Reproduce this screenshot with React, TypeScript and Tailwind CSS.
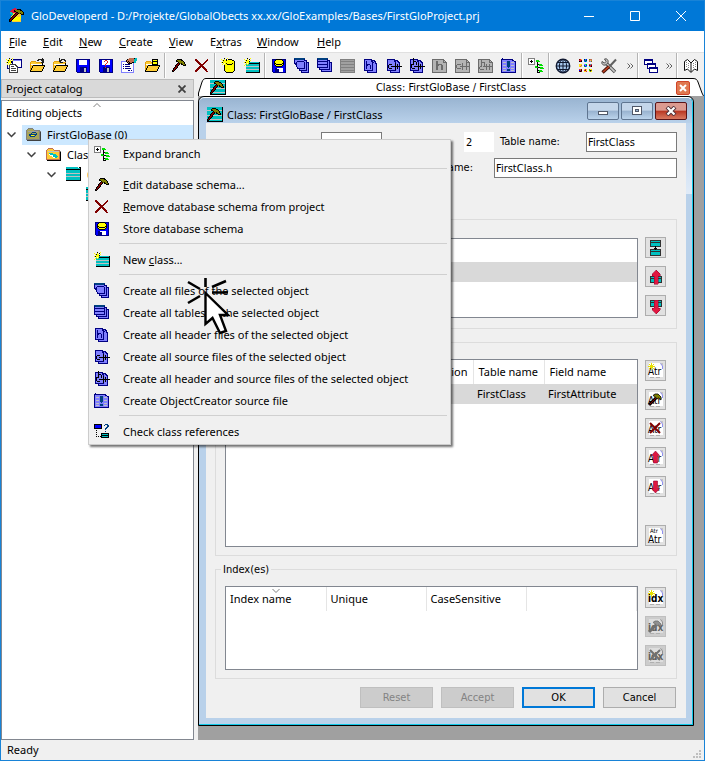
import type { ReactNode } from "react";

const COLORS: Record<string, string> = {
  K: "#000000",
  O: "#808000",
  R: "#800000",
  T: "#00c0c0",
  Y: "#ffff00",
  G: "#ffcc33",
  g: "#e0a010",
  B: "#0000ff",
  N: "#000080",
  L: "#8080ff",
  W: "#ffffff",
  S: "#808080",
  s: "#a0a0a0",
  D: "#404040",
  P: "#e01840",
  p: "#900030",
  M: "#004080",
  E: "#00e000",
  A: "#a0c8f0",
  F: "#c07050",
  C: "#c0c0c0",
  H: "#a8a458",
};

const GRAYS: Record<string, string> = { L: "#b4b4b4", N: "#6c6c6c" };

function Sprite({ rows, gray, children }: { rows: string[]; gray?: boolean; children?: ReactNode }) {
  const cells: ReactNode[] = [];
  rows.forEach((row, y) => {
    let x = 0;
    while (x < row.length) {
      let end = x + 1;
      while (end < row.length && row[end] === row[x]) end++;
      const key = row[x];
      if (key !== ".") {
        const fill = (gray && GRAYS[key]) || COLORS[key];
        cells.push(<rect key={`${x}-${y}`} x={x} y={y} width={end - x} height={1} fill={fill} />);
      }
      x = end;
    }
  });
  return (
    <svg viewBox="0 0 16 16" shapeRendering="crispEdges" aria-hidden="true" className="block h-4 w-4 shrink-0">
      {cells}
      {children}
    </svg>
  );
}

const HAMMER = [
  "................",
  "......KKKKK.....",
  ".....KOOOOKK....",
  ".....KKOOOOOK...",
  ".......KOOOOOK..",
  "......KRKOKOOK..",
  ".....KRRK.KKOOK.",
  "....KRRK....KKK.",
  "....KRK.........",
  "...KRRK.........",
  "..KRRK..........",
  "..KRK...........",
  ".KRK............",
  ".KK.............",
];
const CROSS = [
  "................",
  ".RR..........R..",
  ".RRR........RR..",
  "..RRR......RR...",
  "...RRR....RR....",
  "....RRR..RR.....",
  ".....RRRRR......",
  "......RRR.......",
  ".....RRRRR......",
  "....RRR.RRR.....",
  "...RRR...RRR....",
  "..RRR.....RRR...",
  ".RRR.......RR...",
  ".RR.........RR..",
];
const TABLE = [
  "TTTTTTTTTTTT.KK.",
  "TTTTTTTTTTTTTTK.",
  "KKKKKKKKKKKKKKK.",
  "TTTTTTTTTTTTTTK.",
  "TTTTTTTTTTTTTTK.",
  "TTTTTTTTTTTTTTK.",
  "CCCCCCCCCCCCCCK.",
  "TTTTTTTTTTTTTTK.",
  "TTTTTTTTTTTTTTK.",
  "CCCCCCCCCCCCCCK.",
  "TTTTTTTTTTTTTTK.",
  "TTTTTTTTTTTTTTK.",
  "TTTTTTTTTTTTTTK.",
  "KKKKKKKKKKKKKKK.",
];
const CLASS_HAMMER = [
  "TTTTTTTTTTTTTTTK",
  "TTTTTKKKKTTTTTTK",
  "TTTTKOOOOKKTTTTK",
  "CCCCKKOOOOOKCCCK",
  "TTTTTTKOOOOOKTTK",
  "TTTTTKRKOKOOKTTK",
  "TTTTKRRKTKKOOKTK",
  "TTTKRRKTTTTKKKTK",
  "CCCKRKCCCCCCCCCK",
  "TTKRRKTTTTTTTTTK",
  "TKRRKTTTTTTTTTTK",
  "TKRKTTTTTTTTTTTK",
  "KRKCCCCCCCCCCCCK",
  "KKTTTTTTTTTTTTTK",
  "KKKKKKKKKKKKKKKK",
];
const NEW_CLASS = [
  "...K..Y.........",
  "Y..Y.K..........",
  ".YKYY.Y.........",
  "..YYYK..........",
  "YKYYYTTTTTTTTTTK",
  "..Y.YKKKKKKKKKKK",
  ".YTYTTTTTTTTTTTK",
  "Y.TTTTTTTTTTTTTK",
  "..CCCCCCCCCCCCCK",
  "..TTTTTTTTTTTTTK",
  "..TTTTTTTTTTTTTK",
  "..CCCCCCCCCCCCCK",
  "..TTTTTTTTTTTTTK",
  "..TTTTTTTTTTTTTK",
  "..KKKKKKKKKKKKKK",
];
const CYLINDER = [
  "...K..Y.........",
  "Y..Y.K.KKKK.....",
  ".YKYYKYYYYYKK...",
  "..YYYYYYYYYYYK..",
  "YKYYYYYYYYYYYK..",
  "..Y.YKYYYYYKYK..",
  ".Y.YYYKKKKKYYK..",
  "...KYYYYYYYYYK..",
  "...KYYYYYYYYYK..",
  "...KYYYYYYYYYK..",
  "...KYYYYYYYYYK..",
  "...KYYYYYYYYYK..",
  "...KYYYYYYYYYK..",
  "....KYYYYYYYK...",
  ".....KKKKKKK....",
];
const FLOPPY = [
  "................",
  ".NNNNNNNNNNNNNN.",
  ".NBBWWWWWWWWBBN.",
  ".NBBWWWWWWWWBBN.",
  ".NBBWWWWWWWWBBN.",
  ".NBBWWWWWWWWBBN.",
  ".NBBWWWWWWWWBBN.",
  ".NBBBBBBBBBBBBN.",
  ".NBBBBBBBBBBBBN.",
  ".NBBBNNNNNNNBBN.",
  ".NBBBNNNNCCNBBN.",
  ".NBBBNNNNCCNBBN.",
  ".NBBBNNNNCCNBBN.",
  ".NBBBNNNNCCNBBN.",
  "..NNNNNNNNNNNNN.",
];
const DB_FLOPPY = [
  "................",
  ".NNNNKKKKKKNNNN.",
  ".NBBKYYYYYYKBBN.",
  ".NBKYYYYYYYYKBN.",
  ".NBKYYYYYYYYKBN.",
  ".NBKKYYYYYYKKBN.",
  ".NBKYKKKKKKYKBN.",
  ".NBBKYYYYYYKBBN.",
  ".NBBBKKKKKKBBBN.",
  ".NBBBBBBBBBBBBN.",
  ".NBBNNWWWWWWBBN.",
  ".NBBNNNNWWWWBBN.",
  ".NBBNNNNWWWWBBN.",
  ".NBBNNNNWWWWBBN.",
  "..NNNNNNNNNNNNN.",
];
const FOLDER = [
  "................",
  "................",
  "................",
  "..ggggg.........",
  ".gGGGGGggggggg..",
  ".gGGGGGGGGGGGK..",
  ".gWWWWWWWWWWWK..",
  ".gGGKKKKKKKKKKKK",
  ".gGKGGGGGGGGGGGK",
  ".gGKGGGGGGGGGGK.",
  ".gKGGGGGGGGGGGK.",
  ".gKGGGGGGGGGGK..",
  ".KGGGGGGGGGGGK..",
  ".KKKKKKKKKKKK...",
];
const FILES = [
  "MMMMMMMMMMM.....",
  "NMMMMMMMMMN.....",
  "NLLLLLLLLLNNN...",
  "NLLNNNNNNNLLN...",
  "NLNLLLLLLLNLNNN.",
  "NNNLLLLLLLNLNLN.",
  ".NNLLLLLLLNLNLN.",
  "..NLLLLLLLNLNLN.",
  "..NLLLLLLLNLNLN.",
  "...NLLLLLLNLNLN.",
  "...NNNNNNNNLNLN.",
  ".....NLLLLLLNLN.",
  ".....NNNNNNNNLN.",
  ".......NLLLLLLN.",
  ".......NNNNNNNN.",
];
const TABLES = [
  "MMMMMMMMMMM.....",
  "NMMMMMMMMMN.....",
  "NLLLLLLLLLNNN...",
  "NNNNNNNNNNNLN...",
  "NLLLLLLLLLNLNNN.",
  "NLLLLLLLLLNLNLN.",
  "NNNNNNNNNNNLNLN.",
  "NLLLLLLLLLNLNLN.",
  "NLLLLLLLLLNLNLN.",
  "NNNNNNNNNNNLNLN.",
  "..NLLLLLLLLLNLN.",
  "..NNNNNNNNNNNLN.",
  "....NLLLLLLLLLN.",
  "....NNNNNNNNNNN.",
];
const HEADERS = [
  "................",
  ".NNNNNNNN.......",
  ".NLLLLLLNNNN....",
  ".NLNLLLLNNLNN...",
  ".NLNLLLLLNNLN...",
  ".NLNLLLLLNLLNN..",
  ".NLNNNNLLNLLLN..",
  ".NLNNLLNLNLLLN..",
  ".NLNLLLNLNLLLN..",
  ".NLNLLLNLNLLLN..",
  ".NLNLLLNLNLLLN..",
  ".NLLLLLLLNLLLN..",
  ".NNNNNNNNNLLLN..",
  "....NLLLLLLLLN..",
  "....NNNNNNNNNN..",
];
const SOURCES = [
  "................",
  ".NNNNNNNN.......",
  ".NLLLLLLNNNN....",
  ".NLLLLLLNNLNN...",
  ".NLLLLLLLNLLNN..",
  ".NLLLLLLLKLLLN..",
  ".NLKKKLLLKLKLN..",
  ".NKLLLLLLKLKLN..",
  ".NKLLKKKKKKKKKKK",
  ".NKLLLLLLKLKLN..",
  ".NLKKKLLLKLKLN..",
  ".NLLLLLLLKLLLN..",
  ".NNNNNNNNNLLLN..",
  "....NLLLLLLLLN..",
  "....NNNNNNNNNN..",
];
const HEADERS_SOURCES = [
  "....K...........",
  ".NNNKNNNN.......",
  ".NLLKLLLNNNN....",
  ".NLLKKKLNNLNN...",
  ".NLLKLLKLNLLNN..",
  ".NLLKLLKLKLLLN..",
  ".NKKKLLKLKLKLN..",
  ".NKLLLLLLKLKLN..",
  ".NKLLKKKKKKKKKKK",
  ".NKLLLLLLKLKLN..",
  ".NLKKKLLLKLKLN..",
  ".NLLLLLLLKLLLN..",
  ".NNNNNNNNNLLLN..",
  "....NLLLLLLLLN..",
  "....NNNNNNNNNN..",
];
const ONE_HEADER = [
  "................",
  "NNNNNNNNNNNN....",
  "NLLLLLLLLLLNN...",
  "NLLLNNLLLLLNLN..",
  "NLLLNNLLLLLNNNN.",
  "NLLLNNLLLLLLLLN.",
  "NLLLNNNNNNLLLLN.",
  "NLLLNNNLLNNLLLN.",
  "NLLLNNLLLNNLLLN.",
  "NLLLNNLLLNNLLLN.",
  "NLLLNNLLLNNLLLN.",
  "NLLLNNLLLNNLLLN.",
  "NLLLLLLLLLLLLLN.",
  "NLLLLLLLLLLLLLN.",
  "NNNNNNNNNNNNNNN.",
];
const ONE_SOURCE = [
  "................",
  "NNNNNNNNNNNN....",
  "NLLLLLLLLLLNN...",
  "NLLLLLLLLLLNLN..",
  "NLLLLLLLLLLNNNN.",
  "NLLLLLLNLLLNLLN.",
  "NLNNNNLNLLLNLLN.",
  "NNLLLLLNLLLNLLN.",
  "NNLLLNNNNNNNNNN.",
  "NNLLLLLNLLLNLLN.",
  "NLNNNNLNLLLNLLN.",
  "NLLLLLLNLLLNLLN.",
  "NLLLLLLLLLLLLLN.",
  "NLLLLLLLLLLLLLN.",
  "NNNNNNNNNNNNNNN.",
];
const ONE_BOTH = [
  "................",
  "NNNNNNNNNNNN....",
  "NLLNLLLLLLLNN...",
  "NLLNLLLLLLLNLN..",
  "NLLNNNNLLLLNNNN.",
  "NLLNLLNLLLLLLLN.",
  "NLLNLLNLNLLNLLN.",
  "NLLNLLNLNLLNLLN.",
  "NLNNLNNNNNNNNNN.",
  "NNLLLLLLNLLNLLN.",
  "NNLLLLLLNLLNLLN.",
  "NLNNNNLLNLLNLLN.",
  "NLLLLLLLLLLLLLN.",
  "NLLLLLLLLLLLLLN.",
  "NNNNNNNNNNNNNNN.",
];
const ONE_TABLE = [
  "................",
  "SSSSSSSSSSSSSSS.",
  "SsssssssssssssS.",
  "SSSSSSSSSSSSSSS.",
  "SsssssssssssssS.",
  "SsssssssssssssS.",
  "SSSSSSSSSSSSSSS.",
  "SsssssssssssssS.",
  "SsssssssssssssS.",
  "SSSSSSSSSSSSSSS.",
  "SsssssssssssssS.",
  "SsssssssssssssS.",
  "SSSSSSSSSSSSSSS.",
  "SsssssssssssssS.",
  "SSSSSSSSSSSSSSS.",
];
const CREATOR = [
  ".N..............",
  "NNNNNNNNNNNN....",
  "NLLLLLLLLLLNN...",
  "NLLLLLMMMLLLLNN.",
  "NLCCCLMMMLCCCLN.",
  "NLLLLLMMMLLLLLN.",
  "NLLLLLMMMLLLLLN.",
  "NLCCCLMMMLCCCLN.",
  "NLLLLLMMMLLLLLN.",
  "NLLLLLLMLLLLLLN.",
  "NLCCCLLLLLCCCLN.",
  "NLLLLLMMMLLLLLN.",
  "NLCCCLMMMLCCCLN.",
  "NLLLLLLLLLLLLLN.",
  "NNNNNNNNNNNNNNN.",
];
const BRANCH = [
  "SSSSSSS.........",
  "SWWWWWS.........",
  "SWWKWWS.EEE.....",
  "SWKKKWS.EEEE....",
  "SWWKWWS..K......",
  "SWWWWWS..K......",
  "SSSSSSS..KKEEE..",
  ".........K.EEEE.",
  ".......EEK......",
  ".......EEEKKEEE.",
  ".........K..EEEE",
  ".........K......",
  ".........KKEEE..",
  ".........K.EEEE.",
  ".........KKK....",
];
const REFS = [
  "KKKKKKKK...MMM..",
  "KBBBBBBK..M..MM.",
  "KBBBBBBK.....MM.",
  "KBBBBBBK....MM..",
  "KKKKKKKK...MM...",
  "...........M....",
  "..K.............",
  "...........M....",
  "..K.............",
  ".......KKKKKKKK.",
  "..K....KTTTTTTK.",
  ".......KKKKKKKK.",
  "..K.K.KKTTTTTTK.",
  ".......KKKKKKKK.",
];
const CATALOG = [
  "................",
  "..FFFFF.........",
  ".FGGGGGF........",
  "FGGGGGGGFFFFFF..",
  "FGCCCCCCCCCCCFS.",
  "FGGGGGGGGGGGGFK.",
  "FGGTTTTGGGGGGFK.",
  "FGGWTTTTTTGGGFK.",
  "FGGGWWWTTTTGGFK.",
  "FGGGGGWTTTTTGFK.",
  "FGGGGGGWWTTGGFK.",
  "FGGGGGGGGGGGGFK.",
  "FFFFFFFFFFFFFFK.",
  ".KKKKKKKKKKKKKK.",
];
const CATALOG_SELECTED = [
  "................",
  "..SSSSS.........",
  ".SHHHHHS........",
  "SHHHHHHHSSSSSS..",
  "SHssssssssssHSS.",
  "SHHHHHMMMMHHHSD.",
  "SHHHHMHHHHMHHSD.",
  "SHHMMMMMMMMHHSD.",
  "SHHMMYYYHMHHHSD.",
  "SHHHMMMMMHHHHSD.",
  "SHHHHHHHHHHHHSD.",
  "SHHHHHHHHHHHHSD.",
  "SSSSSSSSSSSSSSD.",
  ".DDDDDDDDDDDDDD.",
];
const WINDOWS = [
  "................",
  "NNNNNNNNN.......",
  "NNNNNNNNN.......",
  "NWWWWWWWN.......",
  "NWWWWWWWN.......",
  "NWWNNNNNNNNN....",
  "NNNNNNNNNNNN....",
  "...NWWWWWWWN....",
  "...NWWWWWWWN....",
  "...NWNNNNNNNNN..",
  "...NNNNNNNNNNN..",
  ".....NWWWWWWWN..",
  ".....NWWWWWWWN..",
  ".....NWWWWWWWN..",
  ".....NNNNNNNNN..",
];
const NEW_PROJECT = [
  "...K..Y.........",
  "Y..Y.K.NNNNNNNNN",
  ".YKYY.YLLLLLLLLN",
  "..YYYKNWWWWWWWWN",
  "YKYYYKNWWWWWWWWN",
  "..Y.Y.NWWWWWWWWN",
  ".Y.YDDDDDDWWWWWN",
  ".N.DWWWWWDDWWWWN",
  ".N.DWDDDWWDDWWWN",
  ".N.DWWWWWWWDNNNN",
  ".NNDWDDDDDWD....",
  "...DWWWWWWWD....",
  "...DWDDDDDWD....",
  "...DWWWWWWWD....",
  "...DDDDDDDDD....",
];
const PROPERTIES = [
  "........FFFFFKTT",
  "......KFFFFFFTTT",
  ".....KFFFFFFFTTT",
  "LLLLLKFKFFFFFTT.",
  "LWWWWWKFKFFKKTT.",
  "LWWWWWWKKKKWL...",
  "LWNWNNNNNWWWL...",
  "LWWWWWWWWWWWL...",
  "LWNWNNNNNWWWL...",
  "LWWWWWWWWWWWL...",
  "LWNWNNNNNNWWL...",
  "LWWWWWWWWWWWL...",
  "LWWWWWWNNWNWL...",
  "LWWWWWWWWWWWL...",
  "LLLLLLLLLLLLL...",
];
const PALETTE = [
  "................",
  ".RPG..NTB..OFF..",
  ".PPR..BEN..FGF..",
  ".KRK..TBT..FLO..",
  "................",
  "................",
  ".GYG..LTE..PTP..",
  ".YGF..BLB..RPR..",
  ".GFG..EBT..TPK..",
  "................",
  "................",
  ".PFR..GPG..OYG..",
  ".BPK..PRY..EKO..",
  ".RKR..YGP..GOY..",
];
const APP = [
  ".....PP.........",
  "...PPPPPKKKK....",
  "..PPPKOOOOOKK...",
  ".PPPPKKOOOOOOK..",
  ".TTPPPPKKOOOOOK.",
  ".TTTGGKRRKOKOOK.",
  "..TTGKRRKGGGKKK.",
  "...GKRRKGGGG....",
  "..YKRRKGGGGY....",
  "..KRRKYYYYYY....",
  ".KRRKYYYYYYY....",
  "KRRKYYYYYYYG....",
  "KRKYYYYYYYYG....",
  "KK.GGGGGGGGG....",
];

function OpenArrow({ flip }: { flip?: boolean }) {
  return (
    <path
      d={flip ? "M13 4V2H12V1H9V2H8M7 0V4M8 2V4M8 4H11" : "M8 3V2H9V1H12V2H14M13 0V4M14 1V4M12 4H15"}
      fill="none"
      stroke="#202020"
    />
  );
}

function Globe() {
  return (
    <svg viewBox="0 0 16 16" aria-hidden="true" className="block h-4 w-4 shrink-0">
      <circle cx="8" cy="8" r="6.7" fill="#a8c8ee" stroke="#101830" strokeWidth="1.4" />
      <path d="M8 1V15M1 8H15M2.5 4.5H13.5M2.5 11.5H13.5" stroke="#101830" fill="none" />
      <ellipse cx="8" cy="8" rx="3.6" ry="6.6" fill="none" stroke="#101830" />
    </svg>
  );
}

function Tools() {
  return (
    <svg viewBox="0 0 16 16" aria-hidden="true" className="block h-4 w-4 shrink-0">
      <path d="M5 5L14 14" stroke="#505050" strokeWidth="3.4" />
      <path d="M5 5L13.6 13.6" stroke="#c8c8c8" strokeWidth="1.6" />
      <path d="M1 3.5L3.5 5L5 3.5L3.5 1C6 0 8 2.5 6.8 5L5 6.8C2.5 8 0 6 1 3.5Z" fill="#c0c0c0" stroke="#505050" />
      <path d="M8.5 8.5L15 1.5" stroke="#606060" strokeWidth="2" />
      <path d="M1.5 14.5L8 8.5" stroke="#401008" strokeWidth="3.4" />
      <path d="M2 14L8 8.5" stroke="#c04020" strokeWidth="1.6" />
    </svg>
  );
}

function Book() {
  return (
    <svg viewBox="0 0 16 16" aria-hidden="true" className="block h-4 w-4 shrink-0">
      <path d="M1.5 3.5L4.5 1.5L8 5L11.5 1.5L14.5 3.5V12.5L11.5 11L8 14.5L4.5 11L1.5 12.5Z" fill="#fff" stroke="#111" />
      <path d="M8 5V14" stroke="#111" fill="none" />
      <path d="M10.5 5V11M12.5 4V10M5.5 5V11M3.5 4V10" stroke="#888" strokeDasharray="1 1" fill="none" />
    </svg>
  );
}

function Doc({ text, gray, two, overlay }: { text: string; gray?: boolean; two?: boolean; overlay?: ReactNode }) {
  const ink = gray ? "#606060" : "#000000";
  return (
    <svg viewBox="0 0 19 19" aria-hidden="true" className="block h-[19px] w-[19px]">
      <path d="M3 2H14L17 5V16H3Z" fill={gray ? "#dedede" : "#ffffff"} />
      <path d="M14 2H17V5Z" fill="#c4c4c4" />
      <path d="M14.5 2.5L16.5 5V8" stroke={gray ? "#909090" : "#9090f0"} fill="none" />
      <path d="M4 16.5H8M10 16.5H14" stroke="#b0b0b0" />
      {two && (
        <text x="4" y="7" fontSize="6" className="font-['DejaVu_Sans_Condensed']" fill={ink}>Atr</text>
      )}
      <text x="2" y={two ? 17 : 14} fontSize="10" fontWeight={text === "idx" ? 700 : 400} className="font-['DejaVu_Sans_Condensed']" fill={ink}>
        {text}
      </text>
      {overlay}
    </svg>
  );
}

const spark = <path d="M3 3L8 8M8 3L3 8M5.5 2V9M2 5.5H9" stroke="#e8e000" strokeWidth="1" />;

function MiniHammer({ gray }: { gray?: boolean }) {
  return (
    <g>
      <path d="M3 15L10 8" stroke={gray ? "#707070" : "#000"} strokeWidth="3" />
      {!gray && <path d="M3.5 14.5L10 8" stroke="#800000" strokeWidth="1" />}
      <path d="M7 5.5L9 4H12L15 7V10L12.5 8L11 9L9 6.5Z" fill={gray ? "#909090" : "#808000"} stroke={gray ? "#707070" : "#000"} strokeWidth="0.8" />
    </g>
  );
}

function MiniCross({ gray }: { gray?: boolean }) {
  return <path d="M4 4L14 14M14 4L4 14" stroke={gray ? "#707070" : "#800000"} strokeWidth="2" />;
}

const arrowUp = <path d="M9.5 3L13.5 7.5H11.5V15H7.5V7.5H5.5Z" fill="#e01840" stroke="#900030" strokeWidth="0.6" />;
const arrowDown = <path d="M9.5 16L13.5 11.5H11.5V4H7.5V11.5H5.5Z" fill="#e01840" stroke="#900030" strokeWidth="0.6" />;

function BaseIcon({ kind }: { kind: "link" | "up" | "down" }) {
  return (
    <svg viewBox="0 0 19 19" shapeRendering="crispEdges" aria-hidden="true" className="block h-[19px] w-[19px]">
      {kind === "link" ? (
        <>
          <path d="M4.5 2.5H14.5V8.5H4.5ZM4.5 11.5H14.5V17.5H4.5Z" fill="#00c0c0" stroke="#303030" />
          <path d="M4 4.5H15M4 13.5H15" stroke="#303030" />
          <path d="M9.5 8V12M8 10.5H11" stroke="#000" />
        </>
      ) : (
        <>
          <path d={kind === "up" ? "M4.5 9.5H15.5V15.5H4.5Z" : "M4.5 4.5H15.5V10.5H4.5Z"} fill="#00c0c0" stroke="#303030" />
          <path d={kind === "up" ? "M4 11.5H16" : "M4 6.5H16"} stroke="#303030" />
          <path d={kind === "up" ? "M10 3L14 7V9H12V17H8V9H6V7Z" : "M10 18L14 14V12H12V4H8V12H6V14Z"} fill="#e01840" stroke="#900030" strokeWidth="0.5" />
        </>
      )}
    </svg>
  );
}

function ToolButton({ label, children }: { label: string; children: ReactNode }) {
  return (
    <button type="button" aria-label={label} className="flex h-full w-[23px] shrink-0 items-center justify-center">
      {children}
    </button>
  );
}

function ToolSeparator() {
  return <div className="mx-px h-full w-0.5 shrink-0 border-l border-[#b4b4b4] bg-white" />;
}

function More() {
  return (
    <button type="button" aria-label="More tools" className="flex h-full w-3 shrink-0 items-center justify-center">
      <svg viewBox="0 0 7 6" aria-hidden="true" className="h-1.5 w-[7px]">
        <path d="M0.5 0.5L3 3L0.5 5.5M3.5 0.5L6 3L3.5 5.5" fill="none" stroke="#606060" />
      </svg>
    </button>
  );
}

function Toolbar() {
  return (
    <div className="flex h-[26px] shrink-0 items-stretch overflow-hidden border-t border-[#e0e0e0] bg-[#f0f0f0] pl-px">
      <ToolButton label="New project"><Sprite rows={NEW_PROJECT} /></ToolButton>
      <ToolButton label="Open project"><Sprite rows={FOLDER}><OpenArrow /></Sprite></ToolButton>
      <ToolButton label="Reopen project"><Sprite rows={FOLDER}><OpenArrow flip /></Sprite></ToolButton>
      <ToolButton label="Save"><Sprite rows={FLOPPY} /></ToolButton>
      <ToolButton label="Save as">
        <Sprite rows={FLOPPY}>
          <path d="M6 3.5H7M7 2.5H9M9.5 3V5M8 5.5H9M7.5 6V8M7 9.5H8" stroke="#e02020" />
        </Sprite>
      </ToolButton>
      <ToolButton label="Properties"><Sprite rows={PROPERTIES} /></ToolButton>
      <ToolButton label="Open schema">
        <Sprite rows={FOLDER}>
          <path d="M8.5 1.5H13.5V6.5H8.5Z" fill="#ffff00" stroke="#000" />
          <path d="M9 3.5H13" stroke="#000" />
        </Sprite>
      </ToolButton>
      <ToolSeparator />
      <ToolButton label="Edit"><Sprite rows={HAMMER} /></ToolButton>
      <ToolButton label="Remove"><Sprite rows={CROSS} /></ToolButton>
      <ToolSeparator />
      <ToolButton label="New schema"><Sprite rows={CYLINDER} /></ToolButton>
      <ToolButton label="New class"><Sprite rows={NEW_CLASS} /></ToolButton>
      <ToolSeparator />
      <ToolButton label="Store schema"><Sprite rows={DB_FLOPPY} /></ToolButton>
      <ToolButton label="Create all files"><Sprite rows={FILES} /></ToolButton>
      <ToolButton label="Create all tables"><Sprite rows={TABLES} /></ToolButton>
      <ToolButton label="Create table"><Sprite rows={ONE_TABLE} /></ToolButton>
      <ToolButton label="Create all headers"><Sprite rows={HEADERS} /></ToolButton>
      <ToolButton label="Create all sources"><Sprite rows={SOURCES} /></ToolButton>
      <ToolButton label="Create all headers and sources"><Sprite rows={HEADERS_SOURCES} /></ToolButton>
      <ToolButton label="Create header"><Sprite rows={ONE_HEADER} gray /></ToolButton>
      <ToolButton label="Create source"><Sprite rows={ONE_SOURCE} gray /></ToolButton>
      <ToolButton label="Create header and source"><Sprite rows={ONE_BOTH} gray /></ToolButton>
      <ToolButton label="Create ObjectCreator"><Sprite rows={CREATOR} /></ToolButton>
      <ToolSeparator />
      <ToolButton label="Expand branch"><Sprite rows={BRANCH} /></ToolButton>
      <ToolSeparator />
      <ToolButton label="Language"><Globe /></ToolButton>
      <ToolButton label="Palette"><Sprite rows={PALETTE} /></ToolButton>
      <ToolButton label="Options"><Tools /></ToolButton>
      <div className="w-1" />
      <More />
      <ToolSeparator />
      <ToolButton label="Cascade windows"><Sprite rows={WINDOWS} /></ToolButton>
      <More />
      <ToolSeparator />
      <ToolButton label="Manual"><Book /></ToolButton>
    </div>
  );
}

const MENUS = [
  { key: "F", rest: "ile", width: "w-[34px]" },
  { key: "E", rest: "dit", width: "w-9" },
  { key: "N", rest: "ew", width: "w-10" },
  { key: "C", rest: "reate", width: "w-[50px]" },
  { key: "V", rest: "iew", width: "w-[41px]" },
  { pre: "E", key: "x", rest: "tras", width: "w-[47px]" },
  { key: "W", rest: "indow", width: "w-[60px]" },
  { key: "H", rest: "elp", width: "w-10" },
];

function Chevron() {
  return (
    <svg viewBox="0 0 9 6" aria-hidden="true" className="h-1.5 w-[9px] shrink-0">
      <path d="M0.5 0.5L4.5 4.5L8.5 0.5" fill="none" stroke="#404040" strokeWidth="1.5" />
    </svg>
  );
}

function Catalog() {
  return (
    <aside className="flex w-[193px] shrink-0 flex-col">
      <div className="mt-px flex h-[19px] items-center justify-between border border-[#bcbcbc] bg-[#d9d9d9] pr-[7px] pl-1">
        <h2>Project catalog</h2>
        <button type="button" aria-label="Close catalog">
          <svg viewBox="0 0 8 8" aria-hidden="true" className="h-2 w-2">
            <path d="M0.5 0.5L7.5 7.5M7.5 0.5L0.5 7.5" stroke="#404040" strokeWidth="1.8" />
          </svg>
        </button>
      </div>
      <div className="mt-0.5 min-h-0 flex-1 overflow-hidden border border-[#828790] bg-white">
        <div className="relative flex h-6 items-center pl-1">
          Editing objects
          <svg viewBox="0 0 8 4" aria-hidden="true" className="absolute top-0.5 left-[91px] h-1 w-2">
            <path d="M0.5 4L4 0.5L7.5 4" fill="none" stroke="#808080" />
          </svg>
        </div>
        <ul role="tree">
          <li role="treeitem" className="flex h-5 items-center pl-[5px]">
            <Chevron />
            <div className="ml-1.5 flex h-5 flex-1 items-center gap-[5px] bg-[#cce8ff] pl-1">
              <Sprite rows={CATALOG_SELECTED} />
              FirstGloBase (0)
            </div>
          </li>
          <li role="treeitem" className="flex h-5 items-center gap-[5px] pl-[25px]">
            <Chevron />
            <div className="ml-[5px] flex items-center gap-[5px]">
              <Sprite rows={CATALOG} />
              Classes
            </div>
          </li>
          <li role="treeitem" className="flex h-5 items-center gap-[5px] pl-[45px]">
            <Chevron />
            <div className="ml-[5px] flex items-center gap-[5px]">
              <Sprite rows={TABLE} />
              <span className="h-1.5 w-1 rounded-sm bg-[#ffcc66]" />
            </div>
          </li>
          <li role="treeitem" className="flex h-5 items-center pl-[84px]">
            <Sprite rows={TABLE} />
          </li>
        </ul>
      </div>
    </aside>
  );
}

function FrameButton({ kind }: { kind: "Minimize" | "Restore" | "Close" }) {
  const close = kind === "Close";
  return (
    <button
      type="button"
      aria-label={kind}
      className={
        close
          ? "flex h-[18px] w-8 items-center justify-center rounded-xs border border-[#5a1418] bg-linear-to-b from-[#dc9a90] from-45% via-[#b83420] via-50% to-[#d87860]"
          : "flex h-[18px] w-8 items-center justify-center rounded-xs border border-[#5f7590] bg-linear-to-b from-[#c4d6ea] from-45% via-[#98b2cf] via-50% to-[#bcd4ec]"
      }
    >
      <svg viewBox="0 0 12 10" aria-hidden="true" className="h-2.5 w-3">
        {kind === "Minimize" && <rect x="1.5" y="5.5" width="9" height="3" fill="#fff" stroke="#505868" />}
        {kind === "Restore" && (
          <>
            <rect x="1.5" y="0.5" width="9" height="8" fill="#fff" stroke="#505868" />
            <rect x="4.5" y="3.5" width="3" height="2" fill="#98b2cf" stroke="#505868" />
          </>
        )}
        {close && (
          <>
            <path d="M2 1L10 9M10 1L2 9" stroke="#503038" strokeWidth="4" />
            <path d="M2.5 1.5L9.5 8.5M9.5 1.5L2.5 8.5" stroke="#fff" strokeWidth="2.2" />
          </>
        )}
      </svg>
    </button>
  );
}

function SideButton({ label, disabled, children }: { label: string; disabled?: boolean; children: ReactNode }) {
  return (
    <button
      type="button"
      aria-label={label}
      disabled={disabled}
      className="flex h-[21px] w-[21px] items-center justify-center border border-[#adadad] bg-[#e1e1e1] disabled:border-[#bfbfbf] disabled:bg-[#cccccc]"
    >
      {children}
    </button>
  );
}

function DialogButton({ label, disabled, primary }: { label: string; disabled?: boolean; primary?: boolean }) {
  return (
    <button
      type="button"
      disabled={disabled}
      className={
        primary
          ? "flex h-[21px] w-[73px] items-center justify-center border-2 border-[#0078d7] bg-[#e1e1e1]"
          : "flex h-[21px] w-[73px] items-center justify-center border border-[#adadad] bg-[#e1e1e1] disabled:border-[#bfbfbf] disabled:bg-[#cccccc] disabled:text-[#838383]"
      }
    >
      {label}
    </button>
  );
}

const GROUP = "flex gap-[7px] border border-[#dcdcdc] pr-2.5 pl-[9px]";
const HEAD = "border-r border-[#e5e5e5] px-[5px] py-0 font-normal";
const UI = "font-['Noto_Sans','Open_Sans',sans-serif]";

function ClassForm() {
  return (
    <form className="flex min-h-0 min-w-0 flex-1 flex-col bg-[#f0f0f0] px-[9px] pt-[9px] pb-2.5">
      <div className="flex h-5 items-center">
        <input aria-label="Class name" className="ml-[106px] h-5 w-[61px] border border-[#7a7a7a] bg-white px-1" />
        <input aria-label="Class id" defaultValue="2" className="ml-[82px] h-5 w-[30px] bg-white px-0.5" />
        <label htmlFor="table-name" className="ml-1.5 w-[86px]">Table name:</label>
        <input id="table-name" defaultValue="FirstClass" className="h-5 min-w-0 flex-1 border border-[#7a7a7a] bg-white px-px" />
      </div>
      <div className="mt-1.5 flex h-5 items-center">
        <label htmlFor="header-name" className="w-[279px] pr-[21px] text-right">name:</label>
        <input id="header-name" defaultValue="FirstClass.h" className="h-5 min-w-0 flex-1 border border-[#7a7a7a] bg-white px-px" />
      </div>
      <div className={GROUP + " mt-[41px] pt-[18px] pb-2.5"}>
        <div className="h-20 flex-1 border border-[#828790] bg-white pt-[23px]">
          <div className="h-5 bg-[#d9d9d9]" />
        </div>
        <div className="-mt-px flex flex-col gap-2">
          <SideButton label="Add base class"><BaseIcon kind="link" /></SideButton>
          <SideButton label="Move base class up"><BaseIcon kind="up" /></SideButton>
          <SideButton label="Move base class down"><BaseIcon kind="down" /></SideButton>
        </div>
      </div>
      <div className={GROUP + " mt-[13px] min-h-0 flex-1 pt-4 pb-2"}>
        <div className={"flex-1 border border-[#828790] bg-white " + UI}>
          <table className="w-full table-fixed text-left">
            <colgroup>
              <col className="w-[174px]" />
              <col className="w-[73px]" />
              <col className="w-[71px]" />
              <col />
            </colgroup>
            <thead>
              <tr className="h-6">
                <th className={HEAD} />
                <th className={HEAD + " text-right"}>Description</th>
                <th className={HEAD}>Table name</th>
                <th className="px-[5px] py-0 font-normal">Field name</th>
              </tr>
            </thead>
            <tbody>
              <tr className="h-5 bg-[#d9d9d9]">
                <td />
                <td />
                <td className="px-1 py-0">FirstClass</td>
                <td className="px-1 py-0">FirstAttribute</td>
              </tr>
            </tbody>
          </table>
        </div>
        <div className="mt-px flex flex-col gap-2">
          <SideButton label="New attribute"><Doc text="Atr" overlay={spark} /></SideButton>
          <SideButton label="Edit attribute"><Doc text="Atr" overlay={<MiniHammer />} /></SideButton>
          <SideButton label="Delete attribute"><Doc text="Atr" overlay={<MiniCross />} /></SideButton>
          <SideButton label="Move attribute up"><Doc text="Atr" overlay={arrowUp} /></SideButton>
          <SideButton label="Move attribute down"><Doc text="Atr" overlay={arrowDown} /></SideButton>
          <div className="mt-5">
            <SideButton label="Copy attribute"><Doc text="Atr" two /></SideButton>
          </div>
        </div>
      </div>
      <fieldset className="mt-[5px] border border-[#dcdcdc] pt-[9px] pr-2.5 pb-2 pl-[9px]">
        <legend className="-ml-1 px-0.5 pt-0.5 leading-[14px]">Index(es)</legend>
        <div className="flex gap-[7px]">
          <div className={"h-[84px] flex-1 border border-[#828790] bg-white " + UI}>
            <table className="w-full table-fixed text-left">
              <colgroup>
                <col className="w-[100px]" />
                <col className="w-[100px]" />
                <col className="w-[100px]" />
                <col />
              </colgroup>
              <thead>
                <tr className="h-6">
                  <th className="relative border-r border-[#e5e5e5] px-1 py-0 font-normal">
                    Index name
                    <svg viewBox="0 0 8 4" aria-hidden="true" className="absolute top-0.5 left-[46px] h-1 w-2">
                      <path d="M0.5 0L4 3.5L7.5 0" fill="none" stroke="#808080" />
                    </svg>
                  </th>
                  <th className="border-r border-[#e5e5e5] px-1 py-0 font-normal">Unique</th>
                  <th className="border-r border-[#e5e5e5] px-1 py-0 font-normal">CaseSensitive</th>
                  <th className="border-r border-[#e5e5e5] px-1 py-0" />
                </tr>
              </thead>
            </table>
          </div>
          <div className="mt-px flex flex-col gap-2">
            <SideButton label="New index"><Doc text="idx" overlay={spark} /></SideButton>
            <SideButton label="Edit index" disabled><Doc text="idx" gray overlay={<MiniHammer gray />} /></SideButton>
            <SideButton label="Delete index" disabled><Doc text="idx" gray overlay={<MiniCross gray />} /></SideButton>
          </div>
        </div>
      </fieldset>
      <div className="mt-2 flex justify-end gap-2 pr-px">
        <DialogButton label="Reset" disabled />
        <DialogButton label="Accept" disabled />
        <DialogButton label="OK" primary />
        <DialogButton label="Cancel" />
      </div>
    </form>
  );
}

function Workspace() {
  return (
    <main className="flex min-w-0 flex-1 flex-col bg-[#a0a0a0] font-['DejaVu_Sans_Condensed','DejaVu_Sans',sans-serif]">
      <div className="flex h-[18px] shrink-0 bg-[#f0f0f0]">
        <svg viewBox="0 0 8 18" aria-hidden="true" className="h-[18px] w-2 shrink-0">
          <path d="M0.5 18V15L4 4C5 1.5 6 0.5 8 0.5V18Z" fill="#fff" />
          <path d="M0.5 18V15L4 4C5 1.5 6 0.5 8 0.5" fill="none" stroke="#000" />
        </svg>
        <div className="flex min-w-0 flex-1 items-center border-t border-black bg-white pl-1">
          <Sprite rows={CLASS_HAMMER} />
          <span className="flex-1 text-center">Class: FirstGloBase / FirstClass</span>
          <button type="button" aria-label="Close tab" className="flex h-3.5 w-3.5 items-center justify-center rounded-xs border border-[#d04428] bg-[#e07850]">
            <svg viewBox="0 0 8 8" aria-hidden="true" className="h-2 w-2">
              <path d="M1 1L7 7M7 1L1 7" stroke="#fff" strokeWidth="2" />
            </svg>
          </button>
        </div>
        <svg viewBox="0 0 14 18" aria-hidden="true" className="h-[18px] w-3.5 shrink-0">
          <path d="M0 0.5H3C6 0.5 7 1.5 8 4L12 15L13.5 18H0Z" fill="#fff" />
          <path d="M0 0.5H3C6 0.5 7 1.5 8 4L12 15L13.5 18" fill="none" stroke="#000" />
        </svg>
      </div>
      <section className="mr-2.5 mb-3.5 flex min-h-0 flex-1 flex-col overflow-hidden rounded-t-md border border-black bg-[#b9d1ea]">
        <div className="flex min-h-0 flex-1 flex-col overflow-hidden rounded-t-md border-t border-r border-b border-t-white border-r-[#10c8e8] border-b-[#10c8e8]">
          <header className="flex h-[25px] shrink-0 items-center gap-0.5 bg-linear-to-b from-[#99b4d1] to-[#b9d1ea] pr-[5px] pl-2">
            <div className="flex flex-1 items-center gap-1 pt-2">
              <Sprite rows={CLASS_HAMMER} />
              <h2 className={UI}>Class: FirstGloBase / FirstClass</h2>
            </div>
            <FrameButton kind="Minimize" />
            <FrameButton kind="Restore" />
            <FrameButton kind="Close" />
          </header>
          <div className="flex min-h-0 flex-1 pb-1.5 pl-[7px]">
            <ClassForm />
            <div className="w-1.5">
              <div className="h-[71px] bg-linear-to-b from-[#c0d6ee] to-[#e0ebf8]" />
            </div>
          </div>
        </div>
      </section>
    </main>
  );
}

function MenuItem({ icon, children }: { icon: string[]; children: ReactNode }) {
  return (
    <button role="menuitem" type="button" className="flex h-[22px] w-full items-center gap-[13px] pl-1 text-left">
      <Sprite rows={icon} />
      <span>{children}</span>
    </button>
  );
}

function MenuSeparator() {
  return <div role="separator" className="mt-[3px] mr-0.5 mb-[5px] ml-[29px] h-px bg-[#d0d0d0]" />;
}

function ContextMenu() {
  return (
    <div role="menu" className="absolute top-[138px] left-[87px] w-[363px] border border-[#cccccc] bg-[#f0f0f0] px-px pt-[3px] pb-px shadow-[2px_2px_2px_rgba(0,0,0,0.55)]">
      <MenuItem icon={BRANCH}>Expand branch</MenuItem>
      <MenuSeparator />
      <MenuItem icon={HAMMER}><u>E</u>dit database schema...</MenuItem>
      <MenuItem icon={CROSS}><u>R</u>emove database schema from project</MenuItem>
      <MenuItem icon={DB_FLOPPY}>Store database schema</MenuItem>
      <MenuSeparator />
      <MenuItem icon={NEW_CLASS}>New <u>c</u>lass...</MenuItem>
      <MenuSeparator />
      <MenuItem icon={FILES}>Create all files of the selected object</MenuItem>
      <MenuItem icon={TABLES}>Create all tables of the selected object</MenuItem>
      <MenuItem icon={HEADERS}>Create all header files of the selected object</MenuItem>
      <MenuItem icon={SOURCES}>Create all source files of the selected object</MenuItem>
      <MenuItem icon={HEADERS_SOURCES}>Create all header and source files of the selected object</MenuItem>
      <MenuItem icon={CREATOR}>Create ObjectCreator source file</MenuItem>
      <MenuSeparator />
      <MenuItem icon={REFS}>Check class references</MenuItem>
    </div>
  );
}

function Pointer() {
  return (
    <svg viewBox="0 0 44 60" aria-hidden="true" className="pointer-events-none absolute top-[275px] left-[185px] h-[60px] w-11">
      <path d="M19.5 2V11M2 6L14 13M2 27L14 20M26 16.5H42M26 11L40 5" stroke="#000" strokeWidth="2.6" fill="none" />
      <path d="M19.5 17V48L26.5 42L34 57L40 55L34 39H42Z" fill="#fff" stroke="#000" strokeWidth="2.4" />
    </svg>
  );
}

export default function App() {
  return (
    <div className={"relative flex h-screen flex-col overflow-hidden border border-[#1883d7] bg-[#f0f0f0] text-[11px] leading-4 text-black " + UI}>
      <header className="flex h-[30px] shrink-0 items-center bg-[#0078d7] pl-2 text-white">
        <Sprite rows={APP} />
        <h1 className="ml-1.5 flex-1 truncate">GloDeveloperd - D:/Projekte/GlobalObects xx.xx/GloExamples/Bases/FirstGloProject.prj</h1>
        <button type="button" aria-label="Minimize" className="flex h-full w-[46px] items-center justify-center">
          <svg viewBox="0 0 10 10" className="h-2.5 w-2.5"><path d="M0 5.5H10" stroke="#fff" /></svg>
        </button>
        <button type="button" aria-label="Maximize" className="flex h-full w-[46px] items-center justify-center">
          <svg viewBox="0 0 10 10" className="h-2.5 w-2.5"><path d="M0.5 0.5H9.5V9.5H0.5Z" stroke="#fff" fill="none" /></svg>
        </button>
        <button type="button" aria-label="Close" className="flex h-full w-[46px] items-center justify-center">
          <svg viewBox="0 0 10 10" className="h-2.5 w-2.5"><path d="M0 0L10 10M10 0L0 10" stroke="#fff" /></svg>
        </button>
      </header>
      <nav className="flex h-[21px] shrink-0 items-center bg-white pl-2">
        {MENUS.map((m) => (
          <button key={m.key} type="button" className={m.width + " text-left"}>
            {m.pre}<u>{m.key}</u>{m.rest}
          </button>
        ))}
      </nav>
      <Toolbar />
      <div className="flex min-h-0 flex-1">
        <Catalog />
        <div className="w-1 shrink-0" />
        <Workspace />
      </div>
      <footer className="flex h-5 shrink-0 items-center justify-between pr-0.5 pl-1.5">
        <span>Ready</span>
        <svg viewBox="0 0 9 9" aria-hidden="true" className="mt-2 h-[9px] w-[9px]">
          <path d="M6 0H8V2H6ZM3 3H5V5H3ZM6 3H8V5H6ZM0 6H2V8H0ZM3 6H5V8H3ZM6 6H8V8H6Z" fill="#bfbfbf" />
        </svg>
      </footer>
      <ContextMenu />
      <Pointer />
    </div>
  );
}
